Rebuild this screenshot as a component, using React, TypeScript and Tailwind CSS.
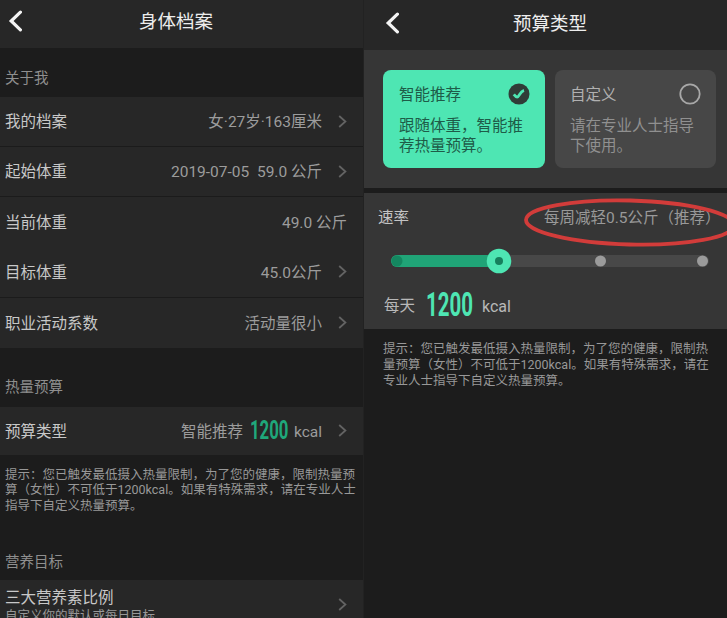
import type { ReactNode } from 'react';

interface RowProps {
  label: string;
  height: string;
  arrow?: boolean;
  divider?: boolean;
  children: ReactNode;
}

function BackIcon() {
  return (
    <svg width="14" height="22" viewBox="0 0 14 22" fill="none" stroke="#f4f4f4" strokeWidth="3.2" strokeLinecap="round">
      <path d="M12.4 2.2 3.2 11l9.2 8.8" />
    </svg>
  );
}

function ArrowIcon() {
  return (
    <svg className="ml-4" width="9" height="13" viewBox="0 0 9 13" fill="none" stroke="#636363" strokeWidth="1.8">
      <path d="M1.2 1 7.4 6.5 1.2 12" />
    </svg>
  );
}

function Row({ label, height, arrow = true, divider = false, children }: RowProps) {
  return (
    <div
      className={`flex items-center justify-between bg-[#272727] pl-[5px] pr-4 ${height} ${
        divider ? 'border-b border-[#1b1b1b]' : ''
      }`}
    >
      <span className="pt-[3px] text-[#c8c8c8]">{label}</span>
      <div className="flex items-center whitespace-pre text-[#9c9c9c]">
        <div className="flex items-center pt-[3px]">{children}</div>
        {arrow && <ArrowIcon />}
      </div>
    </div>
  );
}

function ProfileScreen() {
  return (
    <div className="flex w-[363px] shrink-0 flex-col bg-[#1c1c1c]">
      {/* Header */}
      <div className="flex h-12 shrink-0 items-center bg-[#272727] pl-2 pb-[7px]">
        <BackIcon />
        <h1 className="ml-[117px] pt-[5px] text-[18.5px] text-[#ededed]">身体档案</h1>
      </div>

      <h2 className="flex h-[49px] shrink-0 items-end pb-[7px] pl-[5px] text-[14.5px] text-[#8f8f8f]">关于我</h2>

      <Row label="我的档案" height="h-[50px]" divider>
        女·27岁·163厘米
      </Row>
      <Row label="起始体重" height="h-[50px]" divider>
        {'2019-07-05  59.0 公斤'}
      </Row>
      <Row label="当前体重" height="h-[50px]" arrow={false}>
        49.0 公斤
      </Row>
      <Row label="目标体重" height="h-[51px]" divider>
        45.0公斤
      </Row>
      <Row label="职业活动系数" height="h-[50px]">
        活动量很小
      </Row>

      <h2 className="flex h-[59px] shrink-0 items-end pb-2 pl-[5px] text-[14.5px] text-[#8f8f8f]">热量预算</h2>
      <Row label="预算类型" height="h-12">
        智能推荐
        <span className="-mt-[2px] ml-[7px] w-[38px] text-[25px] font-bold leading-6 text-[#1fa87b]">
          <span className="inline-block origin-left scale-x-[0.67]">1200</span>
        </span>
        <span className="ml-[6px]">kcal</span>
      </Row>

      <p className="mt-3 whitespace-nowrap pl-[5px] text-[12.5px] leading-[15.8px] text-[#989898]">
        提示：您已触发最低摄入热量限制，为了您的健康，限制热量预
        <br />
        算（女性）不可低于1200kcal。如果有特殊需求，请在专业人士
        <br />
        指导下自定义热量预算。
      </p>

      <h2 className="mt-[39px] pl-[5px] text-[14.5px] leading-5 text-[#8f8f8f]">营养目标</h2>
      <div className="mt-[7px] flex h-[38px] shrink-0 justify-between overflow-hidden bg-[#272727] pl-[5px] pr-4">
        <div className="whitespace-nowrap pt-[7px]">
          <p className="leading-[22px] text-[#c8c8c8]">三大营养素比例</p>
          <p className="-mt-px text-[12.5px] leading-4 text-[#989898]">自定义你的默认或每日目标</p>
        </div>
        <div className="pt-[18px]">
          <ArrowIcon />
        </div>
      </div>
    </div>
  );
}

function BudgetScreen() {
  return (
    <div className="flex min-w-0 flex-1 flex-col border-l border-[#222222] bg-[#1c1c1c]">
      {/* Header */}
      <div className="flex h-[50px] shrink-0 items-center bg-[#272727] pb-[5px] pl-[21px]">
        <BackIcon />
        <h1 className="ml-[114px] pt-1 text-[18.5px] text-[#ededed]">预算类型</h1>
      </div>

      {/* Budget type */}
      <div className="flex h-[138px] shrink-0 gap-[10px] bg-[#363636] pl-[19px] pt-5">
        <div className="h-[98px] w-[162px] rounded-lg bg-[#4ee6b3] pl-4 pr-[15px] text-[#1e5c48]">
          <div className="flex h-12 items-center justify-between">
            <span className="pt-1">智能推荐</span>
            <svg width="22" height="22" viewBox="0 0 22 22">
              <circle cx="11" cy="11" r="10.5" fill="#303c38" />
              <path d="M5.8 11.4c1.2 1.6 2.2 2.6 3.4 2.6 2 0 2.6-5.4 6.8-6.6" fill="none" stroke="#4ee6b3" strokeWidth="2.8" />
            </svg>
          </div>
          <p className="-mt-[2px] whitespace-nowrap leading-5">
            跟随体重，智能推
            <br />
            荐热量预算。
          </p>
        </div>
        <div className="h-[98px] w-[161px] rounded-lg bg-[#474747] pl-[15px] pr-[15px] text-[#909090]">
          <div className="flex h-12 items-center justify-between">
            <span className="pt-1 text-[#b0b0b0]">自定义</span>
            <svg width="22" height="22" viewBox="0 0 22 22">
              <circle cx="11" cy="11" r="9.7" fill="none" stroke="#a8a8a8" strokeWidth="1.8" />
            </svg>
          </div>
          <p className="-mt-[2px] whitespace-nowrap leading-5">
            请在专业人士指导
            <br />
            下使用。
          </p>
        </div>
      </div>

      {/* Rate */}
      <div className="relative mt-[5px] h-[136px] shrink-0 bg-[#363636]">
        <div className="flex h-12 items-center whitespace-nowrap pl-[14px] pt-[3px]">
          <span className="text-[#c4c4c4]">速率</span>
          <span className="ml-[135px] text-[#999999]">每周减轻0.5公斤（推荐）</span>
        </div>
        <svg className="ml-[26px] mt-[7px] block" width="320" height="26" viewBox="0 0 320 26">
          <rect x="1" y="7" width="318" height="12" rx="6" fill="#484848" />
          <rect x="1" y="7" width="114" height="12" rx="6" fill="#20a477" />
          <circle cx="7" cy="13" r="5.5" fill="#148760" />
          <circle cx="109" cy="13" r="12.3" fill="#4ee6b3" />
          <circle cx="109" cy="13" r="4" fill="#16805d" />
          <circle cx="210.5" cy="13" r="5.5" fill="#9b9b9b" />
          <circle cx="312.5" cy="13" r="5.5" fill="#9b9b9b" />
        </svg>
        <div className="mt-[14px] flex h-9 items-center pl-5 text-[#b8b8b8]">
          <span className="pt-[2px]">每天</span>
          <span className="-mt-[3px] ml-[11px] w-[48px] text-[32.5px] font-bold leading-8 text-[#4ee6b3]">
            <span className="inline-block origin-left scale-x-[0.63]">1200</span>
          </span>
          <span className="ml-[8px] pt-[2px] text-base">kcal</span>
        </div>
        {/* Hand-drawn mark round the weekly rate */}
        <svg className="absolute right-0 top-0" width="210" height="60" viewBox="0 0 210 60" fill="none">
          <ellipse cx="113" cy="29.5" rx="104" ry="22" stroke="#d23c3a" strokeWidth="3.8" transform="rotate(1.5 113 29.5)" />
        </svg>
      </div>

      <p className="mt-[12px] whitespace-nowrap pl-[19px] text-[12.5px] leading-[15.8px] text-[#989898]">
        提示：您已触发最低摄入热量限制，为了您的健康，限制热
        <br />
        量预算（女性）不可低于1200kcal。如果有特殊需求，请在
        <br />
        专业人士指导下自定义热量预算。
      </p>
    </div>
  );
}

export default function App() {
  return (
    <div className="flex h-[618px] w-[727px] overflow-hidden bg-[#1c1c1c] font-[Roboto,'Noto_Sans_CJK_SC',sans-serif] text-[15.5px]">
      <ProfileScreen />
      <BudgetScreen />
    </div>
  );
}
